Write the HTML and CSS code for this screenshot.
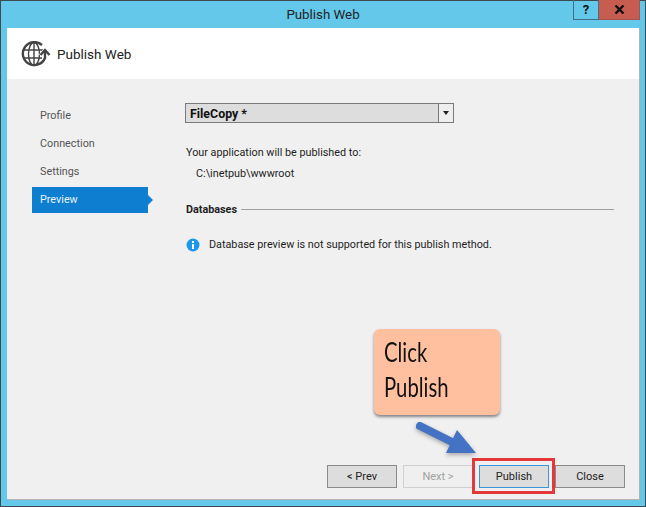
FILE: index.html
```html
<!DOCTYPE html>
<html lang="en">
<head>
  <meta charset="UTF-8">
  <title>Publish Web</title>
  <link rel="stylesheet" href="styles.css">
</head>
<body>

<div class="window">
  <!-- Title bar -->
  <div class="titlebar">
    <span class="title">Publish Web</span>
    <div class="window-buttons">
      <div class="help-button">?</div>
      <div class="close-button">
        <svg width="11" height="9" viewBox="0 0 11 9"><path d="M1.5 .5 L9.5 8.5 M9.5 .5 L1.5 8.5" stroke="#111" stroke-width="2.4" fill="none"/></svg>
      </div>
    </div>
  </div>

  <div class="client">
    <div class="header">
      <svg class="globe" width="30" height="26" viewBox="0 0 30 26">
        <g fill="none" stroke="#444">
          <g stroke-width="1.4">
            <ellipse cx="13" cy="13" rx="5.5" ry="11.5"/>
            <path d="M13 1.5 V24.5 M2 9 H23 M2 17 H21"/>
          </g>
          <path d="M20 15 L24 10 L28 15 M24 11 V20" stroke="#fff" stroke-width="5"/>
          <path d="M21 4 A11.5 11.5 0 1 0 24 17 V10" stroke-width="2.4"/>
          <path d="M19.5 14 L24 9 L28.5 14" stroke-width="2.4"/>
        </g>
      </svg>
      <span class="header-title">Publish Web</span>
    </div>

    <div class="content">
      <ul class="steps">
        <li>Profile</li>
        <li>Connection</li>
        <li>Settings</li>
        <li class="active">Preview</li>
      </ul>

      <div class="panel">
        <div class="combo">
          <span class="combo-text">FileCopy *</span>
          <span class="combo-arrow"></span>
        </div>
        <p class="publish-label">Your application will be published to:</p>
        <p class="publish-path">C:\inetpub\wwwroot</p>
        <div class="section-title">
          <span>Databases</span>
          <div class="section-line"></div>
        </div>
        <div class="info-row">
          <svg width="14" height="14" viewBox="0 0 14 14">
            <circle cx="7" cy="7" r="6.5" fill="#1c97ea"/>
            <rect x="6" y="6" width="2" height="5" fill="#fff"/>
            <rect x="6" y="3" width="2" height="2" fill="#fff"/>
          </svg>
          <span>Database preview is not supported for this publish method.</span>
        </div>
      </div>
    </div>

    <div class="footer">
      <button class="btn">&lt; Prev</button>
      <button class="btn btn-disabled">Next &gt;</button>
      <button class="btn btn-default">Publish</button>
      <button class="btn">Close</button>
    </div>

    <!-- Annotation drawn over the dialog -->
    <div class="callout">
      <span class="hand">Click</span>
      <span class="hand">Publish</span>
    </div>
    <svg class="arrow" width="70" height="40" viewBox="0 0 70 40">
      <path d="M6 7 L40 24" stroke="#4472c4" stroke-width="8" stroke-linecap="round" fill="none"/>
      <path d="M43 11 L62 34 L32 34 Z" fill="#4472c4"/>
    </svg>
  </div>
</div>

</body>
</html>
```
FILE: styles.css
```css
html, body {
  margin: 0;
  padding: 0;
}

body {
  font-family: 'Roboto', 'Noto Sans', sans-serif;
  font-size: 10.8px;
  color: #1e1e1e;
}

.window {
  box-sizing: border-box;
  width: 646px;
  height: 507px;
  display: flex;
  flex-direction: column;
  background-color: #63c8ea;
  border: 1px solid #3c4a52;
}

.titlebar {
  height: 27px;
  flex-shrink: 0;
  display: flex;
  justify-content: center;
  align-items: center;
  position: relative;
}

.title {
  font-size: 13.3px;
  color: #222;
}

.window-buttons {
  position: absolute;
  top: -1px;
  right: 5px;
  display: flex;
}

.help-button, .close-button {
  box-sizing: border-box;
  height: 20px;
  display: flex;
  justify-content: center;
  align-items: center;
  border: 1px solid #3f6f83;
  border-top: none;
}

.help-button {
  width: 26px;
  font-weight: bold;
  font-size: 13px;
  color: #111;
}

.close-button {
  width: 41px;
  background-color: #c75c50;
  border-left: none;
  border-color: #a9524a;
}

.client {
  flex: 1;
  display: flex;
  flex-direction: column;
  margin: 0 6px 7px 6px;
  background-color: #f0f0f0;
  box-shadow: 1px 1px 1px #b4b4b4;
  position: relative;
}

.header {
  height: 51px;
  flex-shrink: 0;
  display: flex;
  align-items: center;
  padding-left: 14px;
  background-color: #ffffff;
}

.globe {
  margin-right: 6px;
}

.header-title {
  padding-top: 1px;
  font-size: 13.5px;
  color: #222;
}

.content {
  flex: 1;
  display: flex;
}

.steps {
  list-style: none;
  width: 116px;
  margin: 23px 0 0 25px;
  padding: 0;
}

.steps li {
  height: 28px;
  line-height: 28px;
  padding-left: 8px;
  color: #555;
}

.steps li.active {
  height: 26px;
  line-height: 26px;
  margin-top: 1px;
  background-color: #0e7fd0;
  color: #e8f2fa;
  position: relative;
}

.steps li.active::after {
  content: "";
  position: absolute;
  left: 116px;
  top: 8px;
  border-left: 5px solid #0e7fd0;
  border-top: 5px solid transparent;
  border-bottom: 5px solid transparent;
}

.panel {
  width: 429px;
  margin: 24px 0 0 37px;
}

.combo {
  box-sizing: border-box;
  width: 269px;
  height: 20px;
  display: flex;
  align-items: center;
  background-color: #dddddd;
  border: 1px solid #7a7a7a;
}

.combo-text {
  flex: 1;
  padding-left: 4px;
  padding-top: 1px;
  font-weight: bold;
  font-size: 12.4px;
  color: #111;
}

.combo-arrow {
  width: 14px;
  height: 18px;
  border-left: 1px solid #7a7a7a;
  background-color: #eeeeee;
  position: relative;
}

.combo-arrow::after {
  content: "";
  position: absolute;
  left: 4px;
  top: 7px;
  border-top: 4px solid #222;
  border-left: 3.5px solid transparent;
  border-right: 3.5px solid transparent;
}

.publish-label {
  margin: 22px 0 0 1px;
  line-height: 16px;
}

.publish-path {
  margin: 5px 0 0 11px;
  line-height: 16px;
}

.section-title {
  display: flex;
  align-items: center;
  margin: 20px 0 0 1px;
  font-weight: bold;
  line-height: 16px;
}

.section-line {
  flex: 1;
  height: 1px;
  margin-left: 4px;
  margin-bottom: 2px;
  background-color: #a0a0a0;
}

.info-row {
  display: flex;
  align-items: center;
  margin-top: 19px;
  margin-left: 1px;
  line-height: 16px;
}

.info-row svg {
  margin-right: 9px;
}

.footer {
  display: flex;
  justify-content: flex-end;
  gap: 6px;
  padding: 0 14px 11px 0;
}

.btn {
  box-sizing: border-box;
  width: 70px;
  height: 23px;
  padding: 0 0 1px 0;
  font-family: inherit;
  font-size: 11px;
  color: #222;
  background-color: #dddddd;
  border: 1px solid #8a8a8a;
}

.btn-disabled {
  background-color: #efefef;
  border-color: #d0d0d0;
  color: #a0a0a0;
}

.btn-default {
  background-color: #dddddd;
  border-color: #3a96dd;
  position: relative;
}

.btn-default::after {
  content: "";
  position: absolute;
  left: -8px;
  top: -8px;
  width: 77px;
  height: 30px;
  border: 3px solid #e5383b;
}

.callout {
  position: absolute;
  left: 367px;
  top: 301px;
  box-sizing: border-box;
  width: 126px;
  height: 86px;
  padding: 6px 10px;
  background-color: #ffc0a0;
  border-radius: 6px;
  box-shadow: 0 2px 3px rgba(0, 0, 0, 0.45);
}

.hand {
  display: block;
  font-family: 'Lato', sans-serif;
  font-size: 26px;
  line-height: 35px;
  color: #111;
  transform: scaleX(0.78);
  transform-origin: left;
}

.arrow {
  position: absolute;
  left: 407px;
  top: 391px;
  filter: drop-shadow(0 2px 2px rgba(0, 0, 0, 0.3));
}
```
